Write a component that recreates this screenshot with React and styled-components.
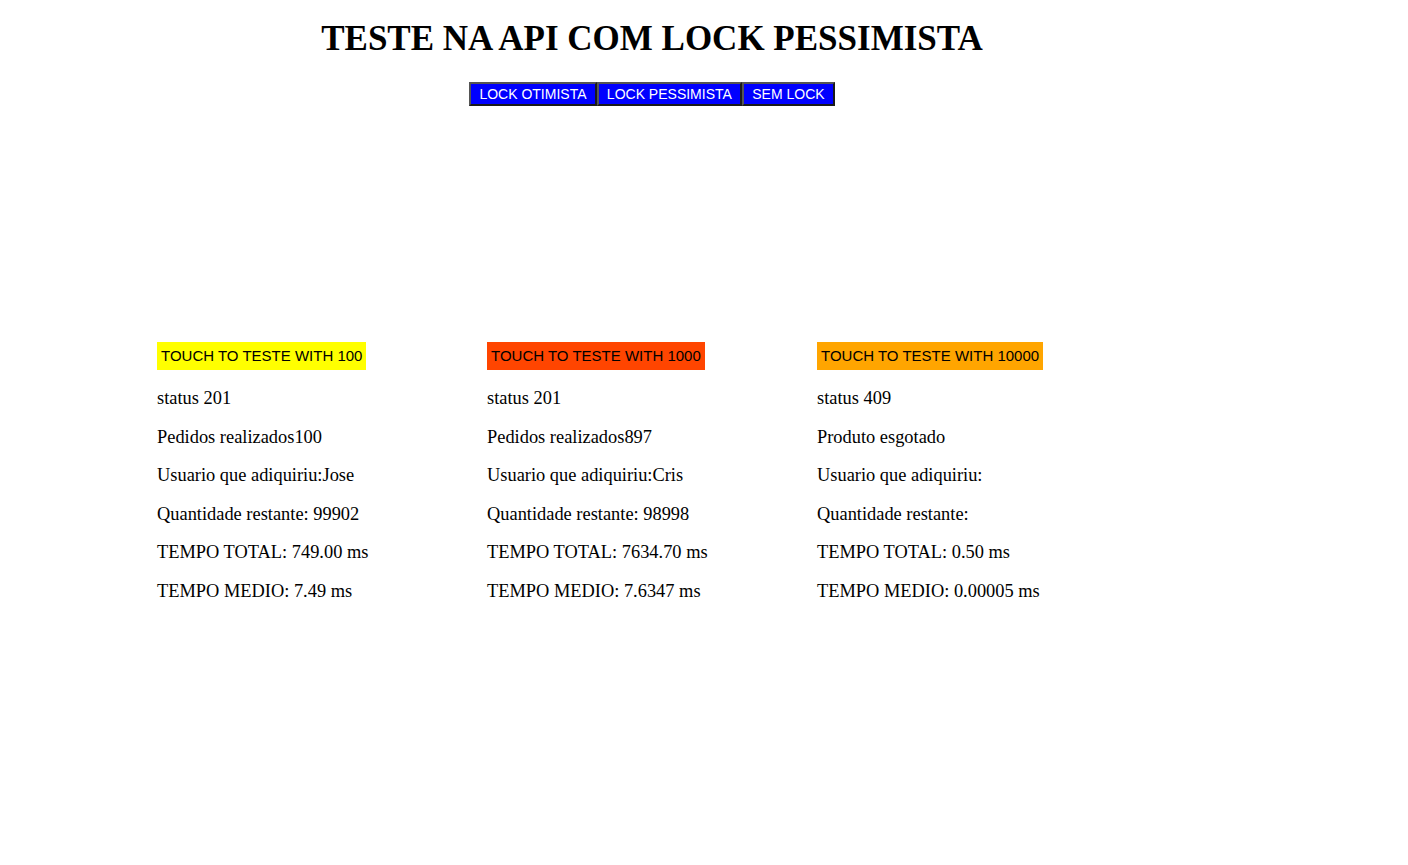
import styled, { createGlobalStyle } from "styled-components";

const GlobalStyle = createGlobalStyle`
  body {
    margin: 8px;
    background: #ffffff;
    font-family: "Liberation Serif", "Times New Roman", serif;
    color: #000000;
  }
`;

const Page = styled.main`
  width: 1288px;
`;

const Title = styled.h1`
  font-size: 35px;
  font-weight: bold;
  text-align: center;
  margin: 11px 0 23px;
`;

const Menu = styled.nav`
  display: flex;
  justify-content: center;
`;

const MenuButton = styled.button`
  font-family: "Liberation Sans", Arial, sans-serif;
  font-size: 14px;
  color: #ffffff;
  background: #0000ff;
  padding: 1px 8.2px;
  border: 2px solid;
  border-color: #555555 #1a1a1a #1a1a1a #555555;
  line-height: 18px;
  cursor: pointer;
`;

const Results = styled.section`
  display: grid;
  grid-template-columns: repeat(3, 330px);
  justify-content: center;
  margin-top: 236px;
`;

const Column = styled.div`
  display: flex;
  flex-direction: column;
  align-items: flex-start;
`;

const TestButton = styled.button`
  font-family: "Liberation Sans", Arial, sans-serif;
  font-size: 15px;
  line-height: 18px;
  color: #000000;
  background: ${(p) => p.$color};
  border: none;
  padding: 5px 4px;
  cursor: pointer;
`;

const Line = styled.p`
  font-size: 18.4px;
  line-height: 20.6px;
  margin: 18px 0 0;
`;

const tests = [
  {
    qty: 100,
    color: "#ffff00",
    lines: [
      "status 201",
      "Pedidos realizados100",
      "Usuario que adiquiriu:Jose",
      "Quantidade restante: 99902",
      "TEMPO TOTAL: 749.00 ms",
      "TEMPO MEDIO: 7.49 ms",
    ],
  },
  {
    qty: 1000,
    color: "#ff4500",
    lines: [
      "status 201",
      "Pedidos realizados897",
      "Usuario que adiquiriu:Cris",
      "Quantidade restante: 98998",
      "TEMPO TOTAL: 7634.70 ms",
      "TEMPO MEDIO: 7.6347 ms",
    ],
  },
  {
    qty: 10000,
    color: "#ffa500",
    lines: [
      "status 409",
      "Produto esgotado",
      "Usuario que adiquiriu:",
      "Quantidade restante:",
      "TEMPO TOTAL: 0.50 ms",
      "TEMPO MEDIO: 0.00005 ms",
    ],
  },
];

function App() {
  return (
    <Page>
      <GlobalStyle />
      <Title>TESTE NA API COM LOCK PESSIMISTA</Title>
      <Menu>
        <MenuButton>LOCK OTIMISTA</MenuButton>
        <MenuButton>LOCK PESSIMISTA</MenuButton>
        <MenuButton>SEM LOCK</MenuButton>
      </Menu>
      <Results>
        {tests.map((t) => (
          <Column key={t.qty}>
            <TestButton $color={t.color}>TOUCH TO TESTE WITH {t.qty}</TestButton>
            {t.lines.map((line, i) => (
              <Line key={`line-${t.qty}-${i}`}>{line}</Line>
            ))}
          </Column>
        ))}
      </Results>
    </Page>
  );
}

export default App;
